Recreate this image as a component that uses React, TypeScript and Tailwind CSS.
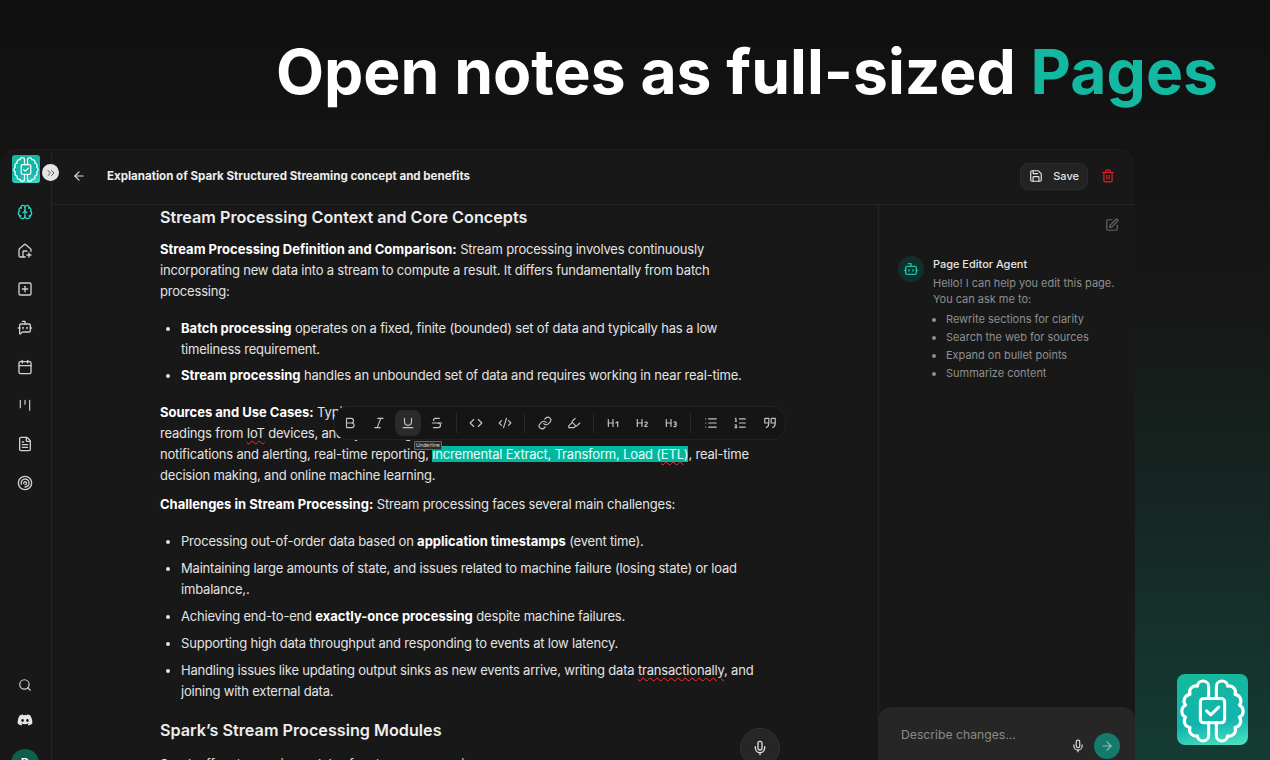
import React from 'react';
import {
  ArrowLeft, ArrowRight, Bold, Bot, BotMessageSquare, Brain, Calendar, ChevronsRight, Code, CodeXml, FileText,
  Heading1, Heading2, Heading3, Highlighter, HousePlus, Italic, Link, List, ListOrdered, Mic, Save, Search,
  SquarePen, SquarePlus, Strikethrough, Trash2, Underline,
} from 'lucide-react';
import { FaDiscord } from 'react-icons/fa';

const BrainLogo = ({ className }: { className?: string }) => (
  <svg viewBox="0 0 24 24" fill="none" stroke="currentColor" strokeWidth="1.05" strokeLinecap="round" strokeLinejoin="round" className={className}>
    <path d="M10.7 8.3V4.4A1.9 1.9 0 0 0 6.9 4.1A2.1 2.1 0 0 0 4.4 6.9A2.2 2.2 0 0 0 2.9 10.5A2.3 2.3 0 0 0 2.9 14.6A2.2 2.2 0 0 0 4.4 18.1A2.1 2.1 0 0 0 6.9 20.9A1.9 1.9 0 0 0 10.7 20.6V16.5" />
    <path d="M13.3 8.3V4.4A1.9 1.9 0 0 1 17.1 4.1A2.1 2.1 0 0 1 19.6 6.9A2.2 2.2 0 0 1 21.1 10.5A2.3 2.3 0 0 1 21.1 14.6A2.2 2.2 0 0 1 19.6 18.1A2.1 2.1 0 0 1 17.1 20.9A1.9 1.9 0 0 1 13.3 20.6V16.5" />
    <rect x="7.9" y="8.3" width="8.2" height="8.2" rx="1.1" />
    <path d="M10 12.5l1.4 1.3 2.7-2.6" />
  </svg>
);

// spiral goal icon in the sidebar
const Spiral = () => (
  <svg viewBox="0 0 24 24" fill="none" stroke="currentColor" strokeWidth="2" strokeLinecap="round" className="w-4 h-4">
    <circle cx="12" cy="12" r="10" />
    <path d="M6.5 14a6 6 0 1 1 5.5 4" />
    <path d="M10 12.5a2.2 2.2 0 1 1 2 2" />
  </svg>
);

// kanban-ish tick marks
const Ticks = () => (
  <svg viewBox="0 0 24 24" fill="none" stroke="currentColor" strokeWidth="1.75" strokeLinecap="round" className="w-4 h-4">
    <path d="M5 5v11M12 5v6M19 5v15" />
  </svg>
);

const Squiggle = ({ children }: { children: React.ReactNode }) => (
  <span className="underline decoration-wavy decoration-red-500 decoration-1 underline-offset-2">{children}</span>
);

const B = ({ children }: { children: React.ReactNode }) => (
  <strong className="font-bold text-white tracking-normal">{children}</strong>
);

const navItems = [
  <HousePlus className="w-4 h-4" key="home" />,
  <SquarePlus className="w-4 h-4" key="add" />,
  <BotMessageSquare className="w-4 h-4" key="bot" />,
  <Calendar className="w-4 h-4" key="cal" />,
  <Ticks key="ticks" />,
  <FileText className="w-4 h-4" key="doc" />,
  <Spiral key="spiral" />,
];

const Sidebar = () => (
  <aside className="w-[52px] shrink-0 border-r border-[#242424] flex flex-col items-center pr-[1px] text-[#cfcfcf] relative">
    <div className="mt-[5px] ml-[2px] w-7 h-7 rounded-[3px] bg-[linear-gradient(170deg,#14b89c,#12b3ac_65%,#45dcc0)] text-white flex items-center justify-center">
      <BrainLogo className="w-7 h-7" />
    </div>
    <button className="absolute left-[42px] top-[14px] w-[17px] h-[17px] rounded-full bg-[#e5e5e5] text-[#555] flex items-center justify-center">
      <ChevronsRight className="w-3 h-3" />
    </button>
    <div className="mt-[21px] flex flex-col gap-[22.7px] items-center">
      <Brain className="w-4 h-4 text-[#2dd4bf]" />
      {navItems}
    </div>
    <div className="mt-auto flex flex-col items-center pb-[8px]">
      <Search className="w-3.5 h-3.5" />
      <FaDiscord className="w-4 h-4 mt-[20px] text-[#e5e5e5]" />
      <div className="mt-[21px] w-7 h-7 rounded-full bg-[#0d5f4e] text-white text-xs font-semibold flex items-center justify-center">D</div>
    </div>
  </aside>
);

const toolGroups = [
  [Bold, Italic, Underline, Strikethrough],
  [Code, CodeXml],
  [Link, Highlighter],
  [Heading1, Heading2, Heading3],
  [List, ListOrdered],
];

const Toolbar = () => (
  <div className="absolute left-[282px] top-[201px] w-[452px] h-[34px] rounded-[14px] border border-[#222] bg-[#151515] flex items-center text-[#c4c4c4]">
    {toolGroups.map((group, i) => (
      <div key={i} className={`flex items-center h-[20px] ${i < toolGroups.length - 1 ? 'border-r border-[#2a2a2a] pr-[4.5px] mr-[5px]' : ''}`}>
        {group.map((Icon, j) => (
          <div key={j} className={`w-[26px] h-[26px] mx-[1.5px] rounded-lg flex items-center justify-center ${Icon === Underline ? 'bg-[#2a2a2a]' : ''}`}>
            <Icon className="w-[14px] h-[14px]" />
          </div>
        ))}
      </div>
    ))}
    <svg viewBox="0 0 24 24" fill="none" stroke="currentColor" strokeWidth="2" strokeLinejoin="round" className="w-[14px] h-[14px] ml-[9px]">
      <path d="M3 4h7v9c0 4-2 6-5 7M3 4v8h7M14 4h7v9c0 4-2 6-5 7M14 4v8h7" />
    </svg>
    <div className="absolute left-[79px] top-[34px] border border-[#666] bg-[#2a2a2a] text-[5.2px] leading-[7px] px-[1px] rounded-[1px] text-[#ddd]">Underline</div>
  </div>
);

const Editor = () => (
  <div className="relative flex-1 overflow-hidden">
    <article className="pl-[108px] text-[13px] leading-[20.8px] tracking-[-0.19px] text-[#e3e3e3] whitespace-nowrap">
      <h2 className="text-[16.2px] leading-[24px] font-semibold tracking-normal text-[#ededed] mb-[10px]">Stream Processing Context and Core Concepts</h2>
      <p>
        <B>Stream Processing Definition and Comparison:</B> Stream processing involves continuously<br />
        incorporating new data into a stream to compute a result. It differs fundamentally from batch<br />
        processing:
      </p>
      <ul className="mt-[16.4px] pl-[21px] list-disc">
        <li className="mb-[6px]"><B>Batch processing</B> operates on a fixed, finite (bounded) set of data and typically has a low<br />timeliness requirement.</li>
        <li><B>Stream processing</B> handles an unbounded set of data and requires working in near real-time.</li>
      </ul>
      <p className="mt-[16px]">
        <B>Sources and Use Cases:</B> Typical sources include sensor data<br />
        readings from <Squiggle>IoT</Squiggle> devices, and system logs. Use cases<br />
        notifications and alerting, real-time reporting, <span className="bg-[#00b8a0] text-[#e8fff9]">incremental Extract, Transform, Load (<Squiggle>ETL</Squiggle>)</span>, real-time<br />
        decision making, and online machine learning.
      </p>
      <p className="mt-[9px]"><B>Challenges in Stream Processing:</B> Stream processing faces several main challenges:</p>
      <ul className="mt-[16px] pl-[21px] list-disc">
        <li className="mb-[6.2px]">Processing out-of-order data based on <B>application timestamps</B> (event time).</li>
        <li className="mb-[6.2px]">Maintaining large amounts of state, and issues related to machine failure (losing state) or load<br />imbalance,.</li>
        <li className="mb-[6.2px]">Achieving end-to-end <B>exactly-once processing</B> despite machine failures.</li>
        <li className="mb-[6.2px]">Supporting high data throughput and responding to events at low latency.</li>
        <li>Handling issues like updating output sinks as new events arrive, writing data <Squiggle>transactionally</Squiggle>, and<br />joining with external data.</li>
      </ul>
      <h2 className="mt-[17px] text-[16.2px] leading-[24px] font-semibold tracking-normal text-[#ededed]">Spark’s Stream Processing Modules</h2>
      <p className="mt-[12px]">Spark offers two main modules for stream processing:</p>
    </article>
    <Toolbar />
    <button className="absolute left-[688px] top-[523px] w-10 h-10 rounded-full bg-[#262626] border border-[#303030] text-[#ddd] flex items-center justify-center">
      <Mic className="w-4 h-4" />
    </button>
  </div>
);

const AgentPanel = () => (
  <section className="w-[257px] shrink-0 border-l border-[#242424] flex flex-col">
    <div className="flex justify-end pt-[13px] pr-[16px] text-[#666]">
      <SquarePen className="w-3.5 h-3.5" />
    </div>
    <div className="mt-[24px] pl-[19px] flex gap-[9px]">
      <div className="w-[26px] h-[26px] rounded-full bg-[#12302b] text-[#19c2a6] flex items-center justify-center">
        <Bot className="w-4 h-4" />
      </div>
      <div className="text-[11px] leading-[16px] tracking-[-0.02px] text-[#8f8f8f] whitespace-nowrap">
        <p className="font-medium text-[#e5e5e5] mb-[3px]">Page Editor Agent</p>
        <p>Hello! I can help you edit this page.<br />You can ask me to:</p>
        <ul className="mt-[3px] pl-[13px] list-disc">
          <li className="leading-[18px]">Rewrite sections for clarity</li>
          <li className="leading-[18px]">Search the web for sources</li>
          <li className="leading-[18px]">Expand on bullet points</li>
          <li className="leading-[18px]">Summarize content</li>
        </ul>
      </div>
    </div>
    <div className="mt-auto h-[78px] rounded-t-xl bg-[#262626] pl-[22px] pr-[15px] pt-[19px] relative">
      <p className="text-[12.2px] leading-[18px] text-[#8a8a8a]">Describe changes...</p>
      <div className="absolute right-[15px] top-[26px] flex items-center gap-[9px]">
        <Mic className="w-3.5 h-3.5 text-[#ddd]" />
        <div className="w-[26px] h-[26px] rounded-full bg-[#147a6b] text-[#9bb] flex items-center justify-center">
          <ArrowRight className="w-3.5 h-3.5" />
        </div>
      </div>
    </div>
  </section>
);

export default function App() {
  return (
    <div className="relative h-[760px] overflow-hidden bg-[linear-gradient(to_bottom,#101010,#161716_40%,#152a25_72%,#143c33)] font-['Inter',sans-serif]">
      <h1 className="h-[149px] pt-[31px] pr-[52px] text-right text-[62.4px] leading-[82px] font-bold text-white">
        Open notes as full-sized <span className="text-[#14b8a0]">Pages</span>
      </h1>
      <div className="w-[1135px] h-[636px] rounded-t-2xl bg-[#181818] flex border-t border-[#1e1e1e]">
        <Sidebar />
        <div className="flex-1 flex flex-col min-w-0">
          <header className="h-[55px] shrink-0 border-b border-[#242424] flex items-center pl-[20px] pr-[20px] pb-[2px]">
            <ArrowLeft className="w-3.5 h-3.5 text-[#ddd]" />
            <p className="ml-[21px] mt-[2px] text-[11.55px] font-bold text-[#eee]">Explanation of Spark Structured Streaming concept and benefits</p>
            <button className="ml-auto h-[27px] px-[8px] rounded-lg border border-[#2c2c2c] bg-[#232323] text-[#e5e5e5] text-[11px] font-medium flex items-center gap-[10px]">
              <Save className="w-3.5 h-3.5" />
              Save
            </button>
            <Trash2 className="ml-[13px] w-3.5 h-3.5 text-[#dc2626]" />
          </header>
          <div className="flex-1 flex min-h-0">
            <Editor />
            <AgentPanel />
          </div>
        </div>
      </div>
      <div className="absolute right-[22px] bottom-[15px] w-[71px] h-[71px] rounded-lg bg-[linear-gradient(170deg,#16b998,#12b4b0_65%,#4fe3c1)] text-white flex items-center justify-center">
        <BrainLogo className="w-[71px] h-[71px]" />
      </div>
    </div>
  );
}
